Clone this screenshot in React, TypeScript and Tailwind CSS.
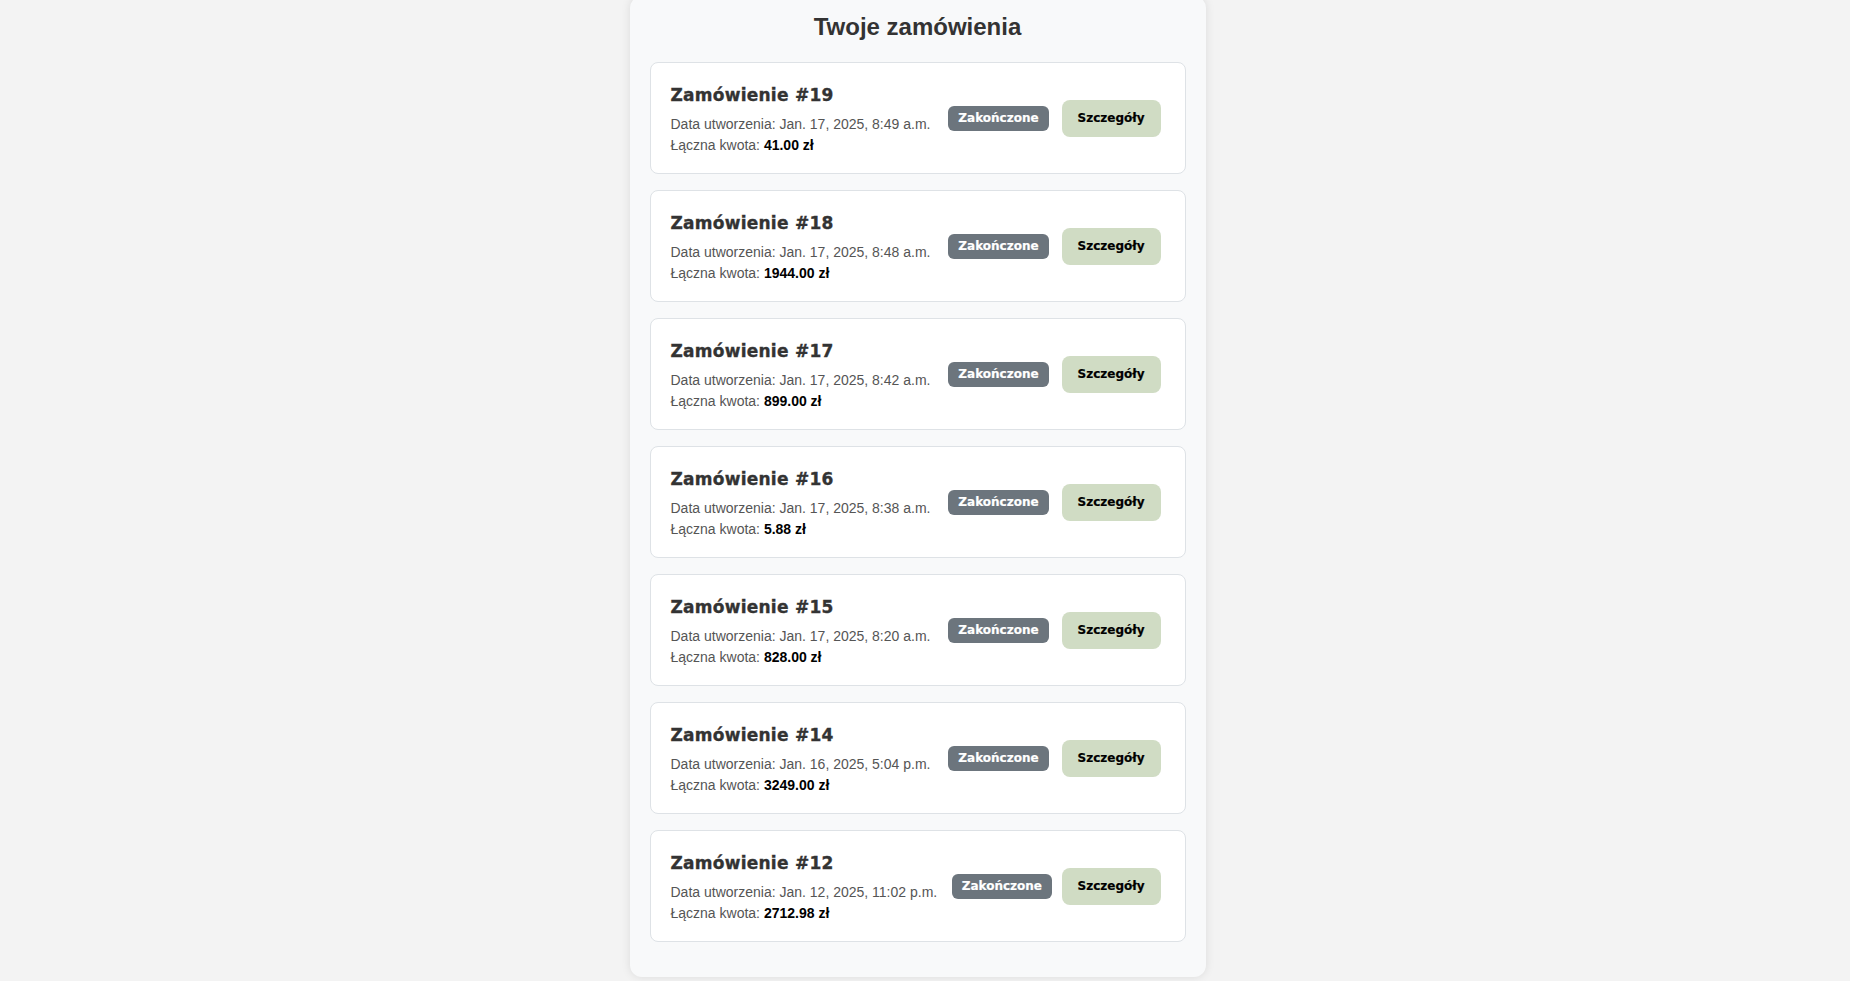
import React from "react";

type Order = { id: number; date: string; total: string };

const orders: Order[] = [
  { id: 19, date: "Jan. 17, 2025, 8:49 a.m.", total: "41.00 zł" },
  { id: 18, date: "Jan. 17, 2025, 8:48 a.m.", total: "1944.00 zł" },
  { id: 17, date: "Jan. 17, 2025, 8:42 a.m.", total: "899.00 zł" },
  { id: 16, date: "Jan. 17, 2025, 8:38 a.m.", total: "5.88 zł" },
  { id: 15, date: "Jan. 17, 2025, 8:20 a.m.", total: "828.00 zł" },
  { id: 14, date: "Jan. 16, 2025, 5:04 p.m.", total: "3249.00 zł" },
  { id: 12, date: "Jan. 12, 2025, 11:02 p.m.", total: "2712.98 zł" },
];

function OrderCard({ order }: { order: Order }) {
  return (
    <div className="flex h-[112px] items-center justify-between rounded-[8px] border border-[#dee2e6] bg-white pl-[20px] pr-[24px]">
      <div className="flex flex-col pt-[5px]">
        <div className="mb-[9px] font-['DejaVu_Sans',sans-serif] text-[17px] font-bold leading-[20px] tracking-[0.25px] text-[#333333] [-webkit-text-stroke:0.35px_#333333] whitespace-nowrap">
          Zamówienie #{order.id}
        </div>
        <div className="font-['Liberation_Sans',Arial,sans-serif] text-[14px] leading-[21px] text-[#555555] whitespace-nowrap">
          Data utworzenia: {order.date}
        </div>
        <div className="font-['Liberation_Sans',Arial,sans-serif] text-[14px] leading-[21px] text-[#555555] whitespace-nowrap">
          Łączna kwota: <span className="font-bold text-black">{order.total}</span>
        </div>
      </div>
      <span className="ml-[5px] flex h-[25px] items-center rounded-[6px] bg-[#6c757d] px-[10px] font-['DejaVu_Sans',sans-serif] text-[12px] font-bold leading-none text-white [-webkit-text-stroke:0.2px_#ffffff] whitespace-nowrap">
        Zakończone
      </span>
      <button className="flex h-[37px] items-center rounded-[8px] bg-[#d0dcc4] px-[16px] font-['DejaVu_Sans',sans-serif] text-[12px] font-bold leading-none text-black [-webkit-text-stroke:0.2px_#000000] whitespace-nowrap">
        Szczegóły
      </button>
    </div>
  );
}

export default function App() {
  return (
    <div className="min-h-screen bg-[#f3f3f3] pr-[15px]">
      <div className="mx-auto -mt-1 mb-[20px] w-[576px] rounded-[12px] bg-[#f8f9fa] px-[20px] pt-[16px] pb-[35px] shadow-[0_0_10px_rgba(0,0,0,0.1)]">
        <h2 className="mb-[21px] text-center font-['Liberation_Sans',Arial,sans-serif] text-[24px] font-bold leading-[29px] text-[#333333]">
          Twoje zamówienia
        </h2>
        <div className="flex flex-col gap-[16px]">
          {orders.map((o) => (
            <OrderCard key={o.id} order={o} />
          ))}
        </div>
      </div>
    </div>
  );
}
